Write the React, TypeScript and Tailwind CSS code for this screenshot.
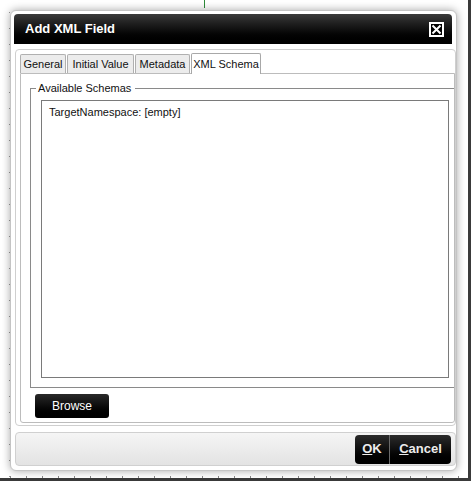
import React from "react";

const font = { fontFamily: '"Liberation Sans", Arial, sans-serif' };

function CloseIcon() {
  return (
    <svg width="15" height="15" viewBox="0 0 15 15">
      <rect x="1" y="1" width="13" height="13" fill="#000" stroke="#fff" strokeWidth="2" />
      <path d="M3.5 3.5 L11.5 11.5 M11.5 3.5 L3.5 11.5" stroke="#fff" strokeWidth="2" />
    </svg>
  );
}

function Tab({ label, active, w }: { label: string; active?: boolean; w: string }) {
  return (
    <div
      className={
        "flex items-center justify-center border border-b-0 rounded-t-[2px] text-[11px] text-[#111] leading-none whitespace-nowrap " +
        w +
        " " +
        (active
          ? "h-[21px] bg-white border-[#a8a8a8] -mb-px relative z-10"
          : "h-[19px] bg-[#ececec] border-[#b0b0b0]")
      }
    >
      {label}
    </div>
  );
}

export default function App() {
  return (
    <div className="relative w-[472px] h-[484px] bg-white overflow-hidden" style={font}>
      {/* page decorations behind the dialog */}
      <div className="absolute left-[204px] top-0 w-px h-[8px] bg-[#2e8b3a]" />
      <div
        className="absolute left-[9px] top-[12px] w-px h-[466px]"
        style={{ backgroundImage: "linear-gradient(#999 0 1px, transparent 1px 16px)", backgroundSize: "1px 16px" }}
      />
      <div
        className="absolute left-[10px] top-[476px] w-[458px] h-[2px]"
        style={{ backgroundImage: "linear-gradient(90deg, #888 0 1px, transparent 1px 16px)", backgroundSize: "16px 2px" }}
      />
      <div className="absolute left-0 top-[478px] w-[471px] h-[3px] bg-[#3a3a3a]" />
      <div className="absolute left-[468px] top-0 w-[3px] h-[481px] bg-[#3a3a3a]" />

      <div className="pt-[10px] pl-[10px]">
        <div className="relative flex flex-col w-[447px] h-[461px] bg-white border border-[#c4c4c4] rounded-[6px] p-[3px] shadow-[0_0_9px_rgba(0,0,0,0.35)]">
          {/* Title bar */}
          <div className="flex items-center justify-between h-[30px] w-[438px] rounded-t-[4px] bg-gradient-to-b from-[#3a3a3a] via-[#111] to-[#000] pl-[11px] pr-[8px]">
            <span className="text-white font-bold text-[13px]">Add XML Field</span>
            <CloseIcon />
          </div>

          {/* Content panel */}
          <div className="mt-[5px] ml-px w-[441px] h-[377px] border border-[#cfcfcf] rounded-[4px] pl-[4px] pr-[0px] pt-[2px] pb-[2px] flex flex-col">
            <div className="flex items-end gap-px h-[21px]">
              <Tab label="General" w="w-[46px]" />
              <Tab label="Initial Value" w="w-[67px]" />
              <Tab label="Metadata" w="w-[55px]" />
              <Tab label="XML Schema" w="w-[70px]" active />
            </div>
            <div className="flex-1 w-[435px] border border-[#bcbcbc] rounded-b-[3px] overflow-hidden pl-[9px] pt-[8px]">
              <fieldset className="w-[440px] h-[306px] border border-[#8a8a8a] pl-[10px] pb-[9px] flex flex-col">
                <legend className="-ml-[5px] pl-[2px] pr-[4px] text-[11px] text-[#111] leading-[13px]">Available Schemas</legend>
                <div className="w-[408px] flex-1 mt-[5px] border border-[#7a7a7a] bg-white pl-[7px] pt-[5px] text-[11px] text-[#111] leading-[13px]">
                  TargetNamespace: [empty]
                </div>
              </fieldset>
              <div className="mt-[6px] ml-[5px] w-[74px] h-[24px] rounded-[3px] bg-gradient-to-b from-[#2a2a2a] via-[#0c0c0c] to-[#000] flex items-center justify-center text-white text-[12px]">
                Browse
              </div>
            </div>
          </div>

          {/* Footer */}
          <div className="mt-[6px] ml-px w-[441px] h-[34px] border border-[#d0d0d0] rounded-[4px] bg-gradient-to-b from-[#f5f5f5] to-[#e3e3e3] flex items-center justify-end pr-[4px]">
            <div className="flex h-[29px] rounded-[4px] overflow-hidden bg-gradient-to-b from-[#2c2c2c] via-[#0e0e0e] to-[#000]">
              <div className="w-[35px] flex items-center justify-center text-[#ececec] text-[13px] font-bold border-r border-[#6a6a6a]">
                <span><span className="underline">O</span>K</span>
              </div>
              <div className="w-[61px] flex items-center justify-center text-[#ececec] text-[13px] font-bold">
                <span><span className="underline">C</span>ancel</span>
              </div>
            </div>
          </div>
        </div>
      </div>
    </div>
  );
}
